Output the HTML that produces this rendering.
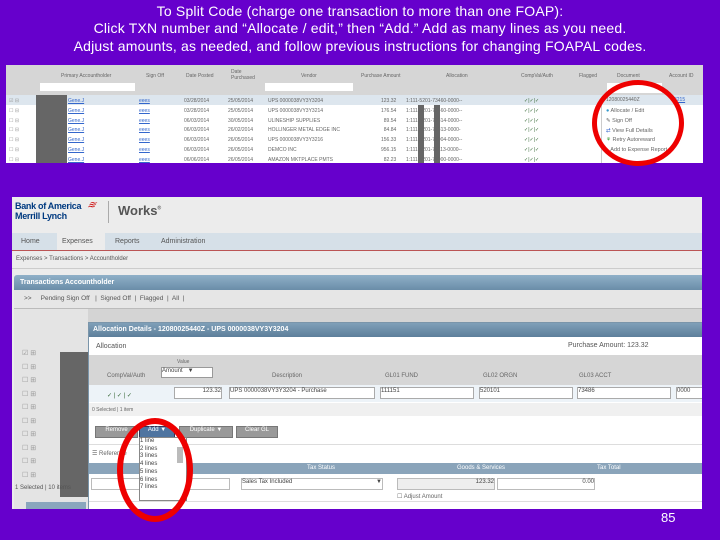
<!DOCTYPE html><html><head><style>
body{margin:0;width:720px;height:540px;background:#6600cc;font-family:"Liberation Sans",sans-serif;position:relative;overflow:hidden}
.a{position:absolute}
.t{color:#fff;font-size:14px;text-align:center;width:720px;left:0;letter-spacing:0.2px}
.s{font-size:5px;color:#666;white-space:nowrap}
.s7{font-size:7px;color:#555;white-space:nowrap}
</style></head><body>
<div class="a t" style="top:3px">To Split Code (charge one transaction to more than one FOAP):</div>
<div class="a t" style="top:20px">Click TXN number and “Allocate / edit,” then “Add.” Add as many lines as you need.</div>
<div class="a t" style="top:38px">Adjust amounts, as needed, and follow previous instructions for changing FOAPAL codes.</div>

<!-- screenshot 1 -->
<div class="a" style="left:6px;top:65px;width:697px;height:98px;background:#fff;overflow:hidden">
 <div class="a" style="left:0;top:0;width:697px;height:30px;background:#d6d6d6"></div>
 <div class="a" style="left:34px;top:18px;width:95px;height:8px;background:#fff"></div>
 <div class="a" style="left:259px;top:18px;width:88px;height:8px;background:#fff"></div>
 <div class="a" style="left:601px;top:18px;width:55px;height:10px;background:#fff"></div>
 <div class="a s" style="left:55px;top:8px">Primary Accountholder</div>
 <div class="a s" style="left:140px;top:8px">Sign Off</div>
 <div class="a s" style="left:180px;top:8px">Date Posted</div>
 <div class="a s" style="left:225px;top:4px">Date<br>Purchased</div>
 <div class="a s" style="left:295px;top:8px">Vendor</div>
 <div class="a s" style="left:355px;top:8px">Purchase Amount</div>
 <div class="a s" style="left:440px;top:8px">Allocation</div>
 <div class="a s" style="left:515px;top:8px">CompVal/Auth</div>
 <div class="a s" style="left:573px;top:8px">Flagged</div>
 <div class="a s" style="left:611px;top:8px">Document</div>
 <div class="a s" style="left:663px;top:8px">Account ID</div>
 <div class="a" style="left:0;top:30px;width:697px;height:10px;background:#dde6ee"></div>
 <div class="a" style="left:30px;top:30px;width:31px;height:68px;background:#666"></div>
 <div class="a" style="left:412px;top:40px;width:6px;height:58px;background:#666"></div>
 <div class="a" style="left:428px;top:40px;width:6px;height:58px;background:#666"></div>
 <div class="a s" style="left:62px;top:32px;line-height:9.8px;color:#36c;text-decoration:underline">Gene.J<br>Gene.J<br>Gene.J<br>Gene.J<br>Gene.J<br>Gene.J<br>Gene.J</div>
 <div class="a s" style="left:133px;top:32px;line-height:9.8px;color:#36c;text-decoration:underline">eees<br>eees<br>eees<br>eees<br>eees<br>eees<br>eees</div>
 <div class="a s" style="left:178px;top:32px;line-height:9.8px">03/28/2014<br>03/28/2014<br>06/03/2014<br>06/03/2014<br>06/03/2014<br>06/03/2014<br>06/06/2014</div>
 <div class="a s" style="left:222px;top:32px;line-height:9.8px">25/05/2014<br>25/05/2014<br>30/05/2014<br>26/02/2014<br>26/05/2014<br>26/05/2014<br>26/05/2014</div>
 <div class="a s" style="left:262px;top:32px;line-height:9.8px">UPS 0000038VY3Y3204<br>UPS 0000038VY3Y3214<br>ULINESHIP SUPPLIES<br>HOLLINGER METAL EDGE INC<br>UPS 0000038VY3Y3216<br>DEMCO INC<br>AMAZON MKTPLACE PMTS</div>
 <div class="a s" style="left:375px;top:32px;line-height:9.8px;text-align:right">123.32<br>176.54<br>89.54<br>84.84<br>156.33<br>956.15<br>82.23</div>
 <div class="a s" style="left:400px;top:32px;line-height:9.8px">1:111-5201-73460-0000--<br>1:111-5201-73460-0000--<br>1:111-5201-72314-0000--<br>1:111-5201-72313-0000-<br>1:111-5201-72004-0000--<br>1:111-5201-72113-0000--<br>1:111-5201-72000-0000--</div>
 <div class="a s" style="left:518px;top:32px;line-height:9.8px;color:#363">✓|✓|✓<br>✓|✓|✓<br>✓|✓|✓<br>✓|✓|✓<br>✓|✓|✓<br>✓|✓|✓<br>✓|✓|✓</div>
 <div class="a s" style="left:3px;top:32px;line-height:9.8px;color:#999">☑ ⊟<br>☐ ⊟<br>☐ ⊟<br>☐ ⊟<br>☐ ⊟<br>☐ ⊟<br>☐ ⊟</div>
 <div class="a s" style="left:600px;top:32px">12080025440Z</div>
 <div class="a s" style="left:668px;top:32px;color:#36c;text-decoration:underline">3215</div>
 <div class="a" style="left:595px;top:40px;width:75px;height:58px;background:#fff;border-left:1px solid #ccc"></div>
 <div class="a s" style="left:600px;top:42px;line-height:9.8px;font-size:5.5px"><span style="color:#39c">●</span> Allocate / Edit<br><span>✎</span> Sign Off<br><span style="color:#36c">⇄</span> View Full Details<br><span style="color:#393">⚘</span> Retry Autoreward<br>&nbsp;&nbsp; Add to Expense Report</div>
</div>
<div class="a" style="left:592px;top:80px;width:82px;height:76px;border:5px solid #e00;border-radius:50%"></div>

<!-- screenshot 2 -->
<div class="a" style="left:12px;top:197px;width:690px;height:312px;background:#ececec;overflow:hidden">
 <div class="a" style="left:3px;top:4px;font-size:9px;font-weight:bold;color:#003a80;line-height:10px;letter-spacing:-0.3px">Bank of America<br>Merrill Lynch</div>
 <div class="a" style="left:76px;top:3px;color:#c00;font-size:10px;transform:skewX(-30deg)">≋</div>
 <div class="a" style="left:96px;top:4px;width:1px;height:22px;background:#aaa"></div>
 <div class="a" style="left:106px;top:6px;font-size:13px;font-weight:bold;color:#555">Works<sup style="font-size:5px">®</sup></div>
 <div class="a" style="left:0;top:36px;width:690px;height:17px;background:#d6e0e8;border-bottom:1px solid #b55"></div>
 <div class="a" style="left:45px;top:36px;width:48px;height:17px;background:#ececec"></div>
 <div class="a s7" style="left:9px;top:41px">Home</div>
 <div class="a s7" style="left:50px;top:41px">Expenses</div>
 <div class="a s7" style="left:103px;top:41px">Reports</div>
 <div class="a s7" style="left:149px;top:41px">Administration</div>
 <div class="a s7" style="left:4px;top:59px;font-size:6px">Expenses &gt; Transactions &gt; Accountholder</div>
 <div class="a" style="left:0;top:71px;width:690px;height:1px;background:#ccc"></div>
 <div class="a" style="left:2px;top:78px;width:688px;height:15px;background:linear-gradient(#8fb0c8,#6a8da8);border-radius:3px 0 0 0"></div>
 <div class="a s7" style="left:8px;top:82px;color:#fff;font-weight:bold">Transactions  Accountholder</div>
 <div class="a" style="left:2px;top:93px;width:688px;height:18px;background:#e6e6e6;border-bottom:1px solid #bbb"></div>
 <div class="a s7" style="left:12px;top:98px;font-size:6.5px">&gt;&gt; &nbsp;&nbsp;&nbsp; Pending Sign Off &nbsp;&nbsp;|&nbsp; Signed Off &nbsp;|&nbsp; Flagged &nbsp;|&nbsp; All &nbsp;|</div>
 <div class="a" style="left:2px;top:112px;width:688px;height:24px;background:#d4d4d4"></div>
 <div class="a" style="left:2px;top:112px;width:74px;height:200px;background:#e4e4e4"></div>
 <div class="a" style="left:48px;top:155px;width:28px;height:145px;background:#666"></div>
 <div class="a s7" style="left:10px;top:150px;line-height:13.5px;color:#999">☑ ⊞<br>☐ ⊞<br>☐ ⊞<br>☐ ⊞<br>☐ ⊞<br>☐ ⊞<br>☐ ⊞<br>☐ ⊞<br>☐ ⊞<br>☐ ⊞</div>
 <div class="a s7" style="left:3px;top:288px;font-size:6px">1 Selected | 10 items</div>
 <div class="a" style="left:14px;top:305px;width:60px;height:7px;background:#8aa6bd"></div>
 <!-- dialog -->
 <div class="a" style="left:76px;top:125px;width:614px;height:187px;background:#fff;border:1px solid #7a95aa">
  <div class="a" style="left:0;top:0;width:614px;height:14px;background:linear-gradient(#7f9fb8,#5d7f9b)"></div>
  <div class="a s7" style="left:4px;top:3px;color:#fff;font-weight:bold">Allocation Details - 12080025440Z - UPS 0000038VY3Y3204</div>
  <div class="a s7" style="left:7px;top:20px">Allocation</div>
  <div class="a s7" style="left:479px;top:19px">Purchase Amount: 123.32</div>
  <div class="a" style="left:0;top:32px;width:614px;height:30px;background:#d6d6d6"></div>
  <div class="a s" style="left:18px;top:50px;font-size:6px">CompVal/Auth</div>
  <div class="a s" style="left:88px;top:36px">Value</div>
  <div class="a" style="left:72px;top:44px;width:50px;height:9px;background:#fff;border:1px solid #999;font-size:6px;color:#444">Amount&nbsp;&nbsp;&nbsp;▼</div>
  <div class="a s" style="left:183px;top:50px;font-size:6px">Description</div>
  <div class="a s" style="left:296px;top:50px;font-size:6px">GL01 FUND</div>
  <div class="a s" style="left:394px;top:50px;font-size:6px">GL02 ORGN</div>
  <div class="a s" style="left:490px;top:50px;font-size:6px">GL03 ACCT</div>
  <div class="a" style="left:0;top:62px;width:614px;height:17px;background:#edf3f8"></div>
  <div class="a s" style="left:18px;top:69px;color:#363;font-size:6px">✓ | ✓ | ✓</div>
  <div class="a" style="left:85px;top:64px;width:46px;height:10px;background:#fff;border:1px solid #aaa;font-size:6px;text-align:right;color:#444">123.32</div>
  <div class="a" style="left:140px;top:64px;width:144px;height:10px;background:#fff;border:1px solid #aaa;font-size:6px;color:#444">UPS 0000038VY3Y3204 - Purchase</div>
  <div class="a" style="left:291px;top:64px;width:92px;height:10px;background:#fff;border:1px solid #aaa;font-size:6px;color:#444">111151</div>
  <div class="a" style="left:390px;top:64px;width:92px;height:10px;background:#fff;border:1px solid #aaa;font-size:6px;color:#444">520101</div>
  <div class="a" style="left:488px;top:64px;width:92px;height:10px;background:#fff;border:1px solid #aaa;font-size:6px;color:#444">73486</div>
  <div class="a" style="left:587px;top:64px;width:30px;height:10px;background:#fff;border:1px solid #aaa;font-size:6px;color:#444">0000</div>
  <div class="a" style="left:0;top:80px;width:614px;height:13px;background:#f0f0f0"></div>
  <div class="a s" style="left:3px;top:84px">0 Selected | 1 item</div>
  <div class="a" style="left:6px;top:103px;width:41px;height:10px;background:#999;border:1px solid #777;font-size:6px;color:#fff;text-align:center">Remove</div>
  <div class="a" style="left:50px;top:103px;width:34px;height:10px;background:#4e74a0;border:1px solid #335;font-size:6px;color:#fff;text-align:center">Add ▼</div>
  <div class="a" style="left:90px;top:103px;width:52px;height:10px;background:#999;border:1px solid #777;font-size:6px;color:#fff;text-align:center">Duplicate ▼</div>
  <div class="a" style="left:147px;top:103px;width:40px;height:10px;background:#999;border:1px solid #777;font-size:6px;color:#fff;text-align:center">Clear GL</div>
  <div class="a" style="left:0;top:121px;width:614px;height:1px;background:#ddd"></div>
  <div class="a s" style="left:3px;top:127px;font-size:6px">☰ Reference</div>
  <div class="a" style="left:0;top:140px;width:614px;height:11px;background:#8aa4ba"></div>
  <div class="a s" style="left:218px;top:142px;color:#fff;font-size:6px">Tax Status</div>
  <div class="a s" style="left:368px;top:142px;color:#fff;font-size:6px">Goods &amp; Services</div>
  <div class="a s" style="left:508px;top:142px;color:#fff;font-size:6px">Tax Total</div>
  <div class="a" style="left:2px;top:155px;width:137px;height:10px;background:#fff;border:1px solid #bbb"></div>
  <div class="a" style="left:152px;top:155px;width:140px;height:10px;background:#fff;border:1px solid #bbb;font-size:6px;color:#444">Sales Tax Included<span style="float:right">▼</span></div>
  <div class="a" style="left:308px;top:155px;width:96px;height:10px;background:#eee;border:1px solid #bbb;font-size:6px;text-align:right;color:#444">123.32</div>
  <div class="a" style="left:408px;top:155px;width:96px;height:10px;background:#fff;border:1px solid #bbb;font-size:6px;text-align:right;color:#444">0.00</div>
  <div class="a s" style="left:308px;top:170px;font-size:6px">☐ Adjust Amount</div>
  <div class="a" style="left:0;top:178px;width:614px;height:1px;background:#ddd"></div>
  <div class="a" style="left:50px;top:114px;width:46px;height:62px;background:#fff;border:1px solid #888;font-size:6px;color:#444;line-height:7.7px">1 line<br>2 lines<br>3 lines<br>4 lines<br>5 lines<br>6 lines<br>7 lines</div>
  <div class="a" style="left:88px;top:124px;width:6px;height:16px;background:#bbb"></div>
 </div>
</div>
<div class="a" style="left:117px;top:418px;width:64px;height:92px;border:6px solid #e00;border-radius:50%"></div>
<div class="a" style="left:661px;top:510px;color:#fff;font-size:13px">85</div>
</body></html>
